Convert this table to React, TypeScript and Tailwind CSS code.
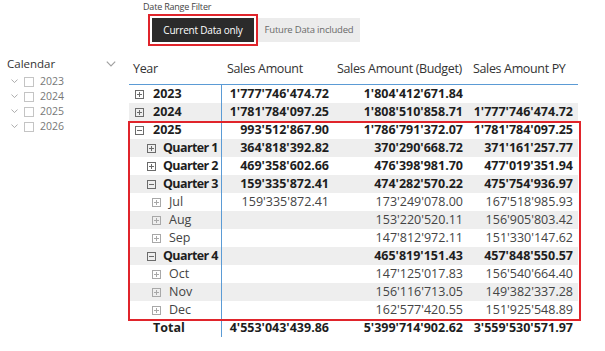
import React from 'react';

type Row = {
  label: string;
  level: 0 | 1 | 2;
  open?: boolean;
  sales: string;
  budget: string;
  py: string;
};

const rows: Row[] = [
  { label: '2023', level: 0, sales: "1'777'746'474.72", budget: "1'804'412'671.84", py: '' },
  { label: '2024', level: 0, sales: "1'781'784'097.25", budget: "1'808'510'858.71", py: "1'777'746'474.72" },
  { label: '2025', level: 0, open: true, sales: "993'512'867.90", budget: "1'786'791'372.07", py: "1'781'784'097.25" },
  { label: 'Quarter 1', level: 1, sales: "364'818'392.82", budget: "370'290'668.72", py: "371'161'257.77" },
  { label: 'Quarter 2', level: 1, sales: "469'358'602.66", budget: "476'398'981.70", py: "477'019'351.94" },
  { label: 'Quarter 3', level: 1, open: true, sales: "159'335'872.41", budget: "474'282'570.22", py: "475'754'936.97" },
  { label: 'Jul', level: 2, sales: "159'335'872.41", budget: "173'249'078.00", py: "167'518'985.93" },
  { label: 'Aug', level: 2, sales: '', budget: "153'220'520.11", py: "156'905'803.42" },
  { label: 'Sep', level: 2, sales: '', budget: "147'812'972.11", py: "151'330'147.62" },
  { label: 'Quarter 4', level: 1, open: true, sales: '', budget: "465'819'151.43", py: "457'848'550.57" },
  { label: 'Oct', level: 2, sales: '', budget: "147'125'017.83", py: "156'540'664.40" },
  { label: 'Nov', level: 2, sales: '', budget: "156'116'713.05", py: "149'382'337.28" },
  { label: 'Dec', level: 2, sales: '', budget: "162'577'420.55", py: "151'925'548.89" },
];

function ToggleBox({ open, light }: { open?: boolean; light?: boolean }) {
  const c = light ? '#a8a8a8' : '#6b6b6b';
  return (
    <svg width="9" height="9" viewBox="0 0 9 9" className="shrink-0">
      <rect x="0.5" y="0.5" width="8" height="8" fill="none" stroke={c} />
      <line x1="2" y1="4.5" x2="7" y2="4.5" stroke={c} />
      {!open && <line x1="4.5" y1="2" x2="4.5" y2="7" stroke={c} />}
    </svg>
  );
}

function Chevron({ size = 8 }: { size?: number }) {
  return (
    <svg width={size} height={size / 2 + 1} viewBox="0 0 8 5" className="shrink-0">
      <polyline points="0.5,0.5 4,4 7.5,0.5" fill="none" stroke="#a0a0a0" strokeWidth="1" />
    </svg>
  );
}

export default function App() {
  return (
    <div
      className="relative w-[605px] h-[351px] overflow-hidden bg-white text-[#252423] whitespace-nowrap"
      style={{ fontFamily: '"Open Sans", "Noto Sans", sans-serif' }}
    >
      {/* slicer buttons */}
      <div className="pl-[143px] pt-[1px]">
        <div className="text-[9px] leading-[12px] text-[#444] tracking-[-0.2px]">Date Range Filter</div>
        <div className="flex items-center pl-[5px] mt-[1px]">
          <div className="border-2 border-[#e0242b] p-[2px]">
            <div className="w-[102px] h-[24px] bg-[#2b2b2b] text-white text-[10px] tracking-[-0.2px] flex items-center justify-center">
              Current Data only
            </div>
          </div>
          <div className="w-[102px] h-[24px] bg-[#ececec] text-[#6a6a6a] text-[9.5px] tracking-[-0.2px] flex items-center justify-center">
            Future Data included
          </div>
        </div>
      </div>

      <div className="flex mt-[11px]">
        {/* calendar slicer */}
        <div className="w-[129px] pl-[7px] pr-[13px]">
          <div className="flex items-center justify-between h-[14px]">
            <span className="text-[11.5px] text-[#333]">Calendar</span>
            <Chevron size={10} />
          </div>
          <div className="mt-[3px] flex flex-col">
            {['2023', '2024', '2025', '2026'].map((y) => (
              <div key={y} className="flex items-center h-[15px] pl-[4px]">
                <Chevron size={7} />
                <div className="ml-[6px] w-[10px] h-[10px] border border-[#c4c4c4] bg-white" />
                <span className="ml-[6px] text-[10.5px] text-[#777]">{y}</span>
              </div>
            ))}
          </div>
        </div>

        {/* matrix */}
        <div className="relative w-[449px]">
          <div className="flex h-[28px] pb-[5px] pt-[2px] items-center text-[12.5px] text-[#333] tracking-[-0.35px] border-b border-[#5b9bd5]">
            <div className="w-[93px] pl-[4px]">Year</div>
            <div className="w-[111px] pl-[5px]">Sales Amount</div>
            <div className="w-[136px] pl-[4px]">Sales Amount (Budget)</div>
            <div className="flex-1 pl-[4px]">Sales Amount PY</div>
          </div>
          {rows.map((r, i) => {
            const bold = r.level < 2;
            const pad = r.level === 0 ? 'pl-[6px] gap-[9px]' : r.level === 1 ? 'pl-[18px] gap-[7px]' : 'pl-[23px] gap-[8px]';
            return (
              <div
                key={r.label}
                className={`flex h-[18px] items-center text-[12.5px] ${i % 2 === 1 ? 'bg-[#eeeeee]' : 'bg-white'} ${bold ? 'font-bold text-[#1e1e1e]' : 'text-[#444]'}`}
              >
                <div className={`w-[93px] h-full flex items-center border-r border-[#5b9bd5] ${pad}`}>
                  <ToggleBox open={r.open} light={r.level === 2} />
                  <span className={r.level === 1 ? 'tracking-[-0.6px]' : ''}>{r.label}</span>
                </div>
                <div className="w-[107px] text-right">{r.sales}</div>
                <div className="w-[134px] text-right">{r.budget}</div>
                <div className="w-[110px] text-right">{r.py}</div>
              </div>
            );
          })}
          <div className="flex h-[18px] items-center text-[12.5px] font-bold text-[#1e1e1e]">
            <div className="w-[93px] h-full flex items-center pl-[24px] border-r border-[#5b9bd5]">Total</div>
            <div className="w-[107px] text-right">4'553'043'439.86</div>
            <div className="w-[134px] text-right">5'399'714'902.62</div>
            <div className="w-[110px] text-right">3'559'530'571.97</div>
          </div>

          {/* highlight box */}
          <div className="absolute left-[-1px] top-[64px] w-[453px] h-[200px] border-2 border-[#e0242b] pointer-events-none" />
        </div>
      </div>
    </div>
  );
}
